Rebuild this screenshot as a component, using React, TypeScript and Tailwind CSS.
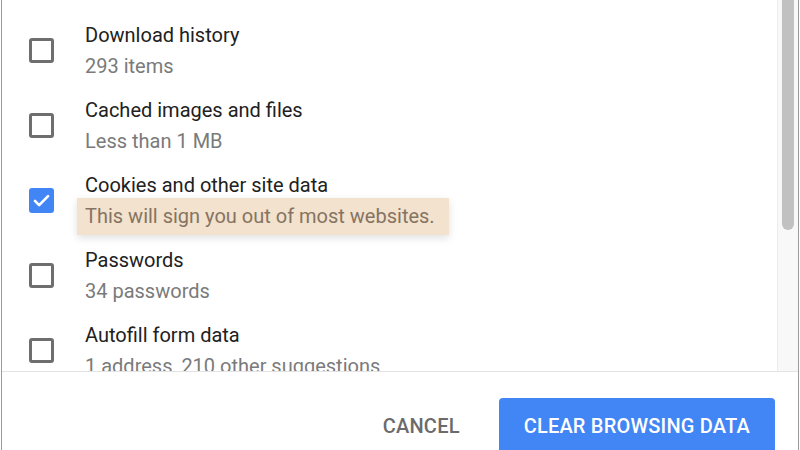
import React from 'react';

type Item = { title: string; detail: string; checked?: boolean; highlight?: boolean };

const ITEMS: Item[] = [
  { title: 'Download history', detail: '293 items' },
  { title: 'Cached images and files', detail: 'Less than 1 MB' },
  { title: 'Cookies and other site data', detail: 'This will sign you out of most websites.', checked: true, highlight: true },
  { title: 'Passwords', detail: '34 passwords' },
  { title: 'Autofill form data', detail: '1 address, 210 other suggestions' },
];

const Checkbox: React.FC<{ checked?: boolean }> = ({ checked }) =>
  checked ? (
    <div className="w-[25px] h-[25px] rounded-[3px] bg-[#4285f4] flex items-center justify-center shrink-0">
      <svg width="21" height="21" viewBox="0 0 24 24" fill="none">
        <path d="M4.5 12.5l4.8 4.8L19.5 7" stroke="white" strokeWidth="3" strokeLinecap="round" strokeLinejoin="round" />
      </svg>
    </div>
  ) : (
    <div className="w-[25px] h-[25px] rounded-[3px] border-[3px] border-[#6e6e6e] shrink-0" />
  );

export default function App() {
  return (
    <div
      className="w-[800px] h-[450px] overflow-hidden bg-white px-px"
      style={{ fontFamily: 'Roboto, "Liberation Sans", sans-serif' }}
    >
      <div className="h-full flex flex-col border-x border-[#9a9a9a]">
        <div className="h-[371px] flex shrink-0 overflow-hidden">
          <div className="flex-1 pt-[13px]">
            {ITEMS.map((it) => (
              <div key={it.title} className="flex items-center h-[75px] pl-[27px]">
                <Checkbox checked={it.checked} />
                <div className="ml-[31px] flex flex-col gap-[3px]">
                  <div className="h-[28px] leading-[28px] text-[20px] text-[#212121]">{it.title}</div>
                  <div className="h-[28px] flex items-center text-[20px] text-[#7a7a7a]">
                    {it.highlight ? (
                      <div className="-ml-2 pl-2 pr-[14px] h-[37px] flex items-center bg-[#f3e2cd] text-[#857462] shadow-[0_3px_8px_rgba(0,0,0,0.12)]">
                        {it.detail}
                      </div>
                    ) : (
                      it.detail
                    )}
                  </div>
                </div>
              </div>
            ))}
          </div>
          <div className="w-[21px] bg-[#f8f8f8] border-l border-[#ececec] flex justify-center">
            <div className="w-[12px] h-[240px] -mt-[10px] rounded-full bg-[#c1c1c1]" />
          </div>
        </div>
        <div className="border-t border-[#e3e3e3] flex-1 flex items-start justify-end pt-[26px] pr-[23px]">
          <button className="h-[55px] px-[15px] mr-[24px] text-[20px] font-medium text-[#6b6b6b] tracking-[0.2px]">CANCEL</button>
          <button className="h-[55px] px-[25px] rounded-[4px] bg-[#4285f4] text-white text-[20px] font-medium tracking-[0.2px]">
            CLEAR BROWSING DATA
          </button>
        </div>
      </div>
    </div>
  );
}
